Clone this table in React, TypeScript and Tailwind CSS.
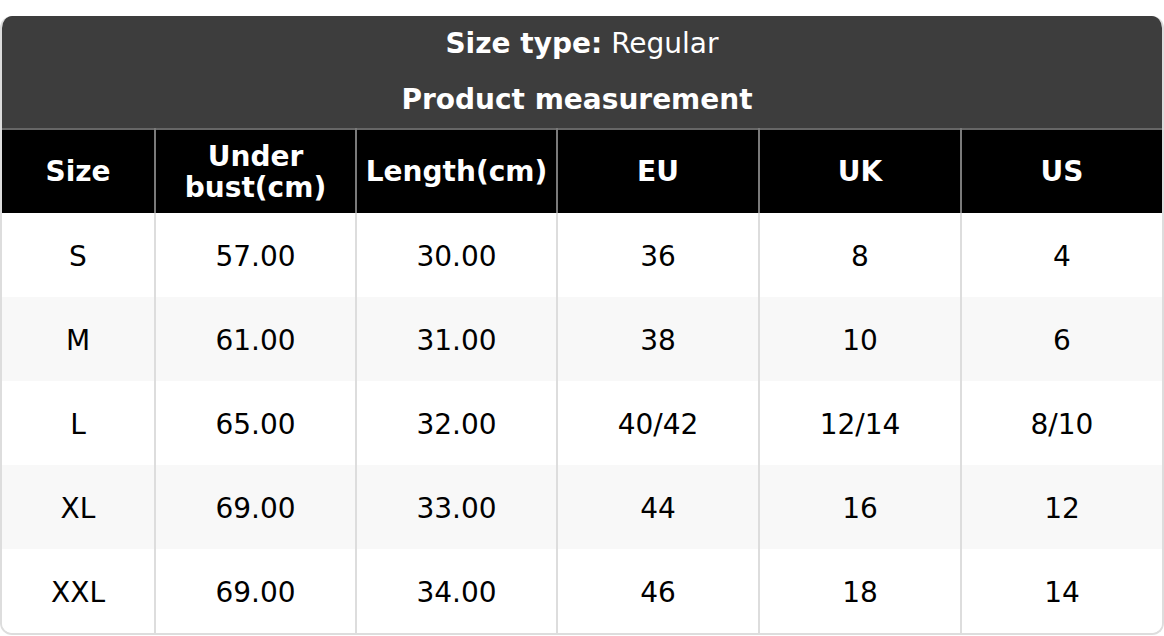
const columns = ['Size', 'Under bust(cm)', 'Length(cm)', 'EU', 'UK', 'US']
const widths = ['w-[153px]', 'w-[201px]', 'w-[201px]', 'w-[202px]', 'w-[202px]', 'w-[201px]']

const rows = [
  ['S', '57.00', '30.00', '36', '8', '4'],
  ['M', '61.00', '31.00', '38', '10', '6'],
  ['L', '65.00', '32.00', '40/42', '12/14', '8/10'],
  ['XL', '69.00', '33.00', '44', '16', '12'],
  ['XXL', '69.00', '34.00', '46', '18', '14'],
]

export default function App() {
  return (
    <div className="pt-[16px] bg-white" style={{ fontFamily: '"DejaVu Sans", Verdana, sans-serif' }}>
      <div className="rounded-[12px] overflow-hidden border-2 border-t-0 border-[#dddddd] w-[1164px]">
        <div className="bg-[#3d3d3d] text-white text-center">
          <div className="h-[56px] flex items-center justify-center text-[28px]">
            <span className="font-bold">Size type:</span>
            <span className="ml-[9px]">Regular</span>
          </div>
          <div className="h-[56px] flex items-center justify-center pr-[10px] text-[28px] font-bold">
            Product measurement
          </div>
        </div>
        <table className="w-full table-fixed border-collapse text-center">
          <thead>
            <tr className="bg-black text-white border-t-2 border-[#666666]">
              {columns.map((c, i) => (
                <th
                  key={c}
                  className={`${widths[i]} h-[84px] px-[6px] text-[28px] leading-[31px] font-bold ${i > 0 ? 'border-l-2 border-[#7a7a7a]' : ''}`}
                >
                  {c === 'Under bust(cm)' ? (
                    <>
                      Under
                      <br />
                      bust(cm)
                    </>
                  ) : (
                    c
                  )}
                </th>
              ))}
            </tr>
          </thead>
          <tbody>
            {rows.map((r, ri) => (
              <tr key={r[0]} className={ri % 2 === 1 ? 'bg-[#f8f8f8]' : 'bg-white'}>
                {r.map((v, ci) => (
                  <td
                    key={ci}
                    className={`h-[84px] pt-[4px] text-[28px] text-black ${ci > 0 ? 'border-l-2 border-[#dddddd]' : ''}`}
                  >
                    {v}
                  </td>
                ))}
              </tr>
            ))}
          </tbody>
        </table>
      </div>
    </div>
  )
}
